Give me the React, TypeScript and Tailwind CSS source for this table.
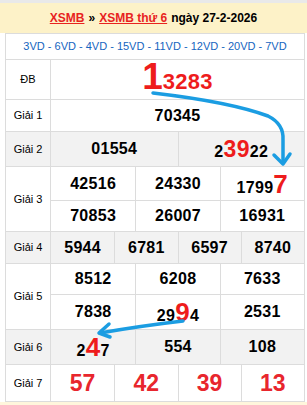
import React from 'react'

const red = 'text-[#ee1c1c]'

function Label({ text }: { text: string }) {
  return (
    <div className="w-[45px] shrink-0 border-r border-[#dcdcdc] flex items-center justify-center text-[11px] text-black">
      {text}
    </div>
  )
}

function Num({ children, first }: { children: React.ReactNode; first?: boolean }) {
  return (
    <div
      className={`flex items-center justify-center font-bold text-[16px] tracking-[0.3px] leading-none text-black ${
        first ? '' : 'border-l border-[#dcdcdc]'
      }`}
    >
      {children}
    </div>
  )
}

function Big({ children, size }: { children: React.ReactNode; size: string }) {
  return <span className={`${red} ${size}`}>{children}</span>
}

export default function App() {
  return (
    <div className="relative w-[307px] h-[405px] bg-white overflow-hidden" style={{ fontFamily: '"Liberation Sans", Arial, sans-serif' }}>
      <div className="h-[3px] bg-[#e9e9e9]" />
      <div className="h-[30px] bg-[#fdf2c8] flex items-center justify-center text-[12px] font-bold text-black">
        <a className="text-[#e8231f] underline">XSMB</a>
        <span className="mx-[4px]">»</span>
        <a className="text-[#e8231f] underline">XSMB thứ 6</a>
        <span className="ml-[4px]">ngày 27-2-2026</span>
      </div>

      <div className="ml-[5px] w-[300px] border-l border-r border-[#dcdcdc]">
        {/* links */}
        <div className="h-[27px] border-t border-b border-[#dcdcdc] flex items-center justify-center text-[11px] text-[#1565c0]">
          3VD - 6VD - 4VD - 15VD - 11VD - 12VD - 20VD - 7VD
        </div>

        {/* ĐB */}
        <div className="h-[40px] flex border-b border-[#dcdcdc]">
          <Label text="ĐB" />
          <div className="flex-1 flex items-center justify-center pb-[6px]">
            <span className={`${red} font-bold leading-none`}>
              <span className="text-[37px]">1</span>
              <span className="text-[22px] tracking-[0.3px]">3283</span>
            </span>
          </div>
        </div>

        {/* Giải 1 */}
        <div className="h-[32px] flex border-b border-[#dcdcdc]">
          <Label text="Giải 1" />
          <div className="flex-1 grid grid-cols-1">
            <Num first>70345</Num>
          </div>
        </div>

        {/* Giải 2 */}
        <div className="h-[35px] flex border-b border-[#dcdcdc] bg-[#f2f2f2]">
          <Label text="Giải 2" />
          <div className="flex-1 grid grid-cols-2">
            <Num first>01554</Num>
            <Num>
              <span>
                2<Big size="text-[23px]">39</Big>22
              </span>
            </Num>
          </div>
        </div>

        {/* Giải 3 */}
        <div className="h-[65px] flex border-b border-[#dcdcdc]">
          <Label text="Giải 3" />
          <div className="flex-1 flex flex-col">
            <div className="h-[34px] grid grid-cols-3 border-b border-[#dcdcdc]">
              <Num first>42516</Num>
              <Num>24330</Num>
              <Num>
                <span>
                  1799<Big size="text-[26px]">7</Big>
                </span>
              </Num>
            </div>
            <div className="flex-1 grid grid-cols-3">
              <Num first>70853</Num>
              <Num>26007</Num>
              <Num>16931</Num>
            </div>
          </div>
        </div>

        {/* Giải 4 */}
        <div className="h-[32px] flex border-b border-[#dcdcdc] bg-[#f2f2f2]">
          <Label text="Giải 4" />
          <div className="flex-1 grid grid-cols-4">
            <Num first>5944</Num>
            <Num>6781</Num>
            <Num>6597</Num>
            <Num>8740</Num>
          </div>
        </div>

        {/* Giải 5 */}
        <div className="h-[66px] flex border-b border-[#dcdcdc]">
          <Label text="Giải 5" />
          <div className="flex-1 flex flex-col">
            <div className="h-[31px] grid grid-cols-3 border-b border-[#dcdcdc]">
              <Num first>8512</Num>
              <Num>6208</Num>
              <Num>7633</Num>
            </div>
            <div className="flex-1 grid grid-cols-3">
              <Num first>7838</Num>
              <Num>
                <span>
                  29<Big size="text-[26px]">9</Big>4
                </span>
              </Num>
              <Num>2531</Num>
            </div>
          </div>
        </div>

        {/* Giải 6 */}
        <div className="h-[35px] flex border-b border-[#dcdcdc] bg-[#f2f2f2]">
          <Label text="Giải 6" />
          <div className="flex-1 grid grid-cols-3">
            <Num first>
              <span>
                2<Big size="text-[26px]">4</Big>7
              </span>
            </Num>
            <Num>554</Num>
            <Num>108</Num>
          </div>
        </div>

        {/* Giải 7 */}
        <div className="h-[37px] flex border-b border-[#dcdcdc]">
          <Label text="Giải 7" />
          <div className="flex-1 grid grid-cols-4 text-[#e8262d]">
            {['57', '42', '39', '13'].map((n, i) => (
              <div
                key={n}
                className={`flex items-center justify-center font-bold text-[23px] leading-none ${
                  i === 0 ? '' : 'border-l border-[#dcdcdc]'
                }`}
              >
                {n}
              </div>
            ))}
          </div>
        </div>
      </div>
      <div className="h-[4px] bg-[#fff6dc]" />

      {/* arrows */}
      <svg className="absolute left-0 top-0 pointer-events-none" width="307" height="405" viewBox="0 0 307 405">
        <g fill="none" stroke="#1b9de2" strokeWidth="3.5" strokeLinecap="round" strokeLinejoin="round">
          <path d="M153 93 Q230 102 268 116 Q284 124 283 140 L283 162" />
          <path d="M274 155 L283 164 L290 154" />
          <path d="M183 321 Q140 326 100 333" />
          <path d="M109 324 L99 333 L110 337" />
        </g>
      </svg>
    </div>
  )
}
